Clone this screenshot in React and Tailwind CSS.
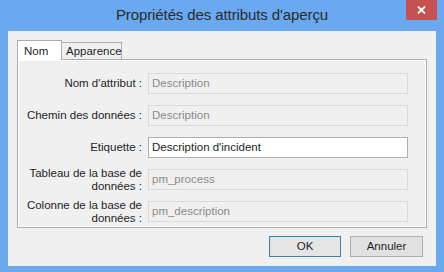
import React from 'react';

const rows = [
  { label: ['Nom d\'attribut :'], value: 'Description', enabled: false },
  { label: ['Chemin des données :'], value: 'Description', enabled: false },
  { label: ['Etiquette :'], value: 'Description d\'incident', enabled: true },
  { label: ['Tableau de la base de', 'données :'], value: 'pm_process', enabled: false },
  { label: ['Colonne de la base de', 'données :'], value: 'pm_description', enabled: false },
];

const App = () => {
  return (
    <div
      className="w-[444px] h-[272px] bg-[#6aa8ef] flex flex-col text-[#1e1e1e]"
      style={{ fontFamily: '"Liberation Sans", Arial, sans-serif' }}
    >
      {/* Title bar */}
      <div className="relative h-[31px] flex items-center justify-center">
        <span className="text-[15px] text-[#2b2b2b] tracking-[-0.1px]">Propriétés des attributs d'aperçu</span>
        <div className="absolute right-[7px] top-0 w-[31px] h-[20px] bg-[#c75050] flex items-center justify-center">
          <svg width="9" height="8" viewBox="0 0 9 8">
            <path d="M1 0.5 L8 7.5 M8 0.5 L1 7.5" stroke="white" strokeWidth="1.8" />
          </svg>
        </div>
      </div>

      {/* Client area */}
      <div className="flex-1 mx-[8px] mb-[6px] bg-[#f0f0f0] flex flex-col pt-[8px] px-[9px]">
        {/* Tabs */}
        <div className="flex items-end h-[20px] text-[11.5px]">
          <div className="w-[45px] h-[20px] bg-white border border-b-0 border-[#acacac] pl-[6px] pt-[2px] relative z-10 -mb-px">
            Nom
          </div>
          <div className="w-[60px] h-[17px] bg-[#f0f0f0] border border-l-0 border-b-0 border-[#acacac] pl-[4px] leading-[16px]">
            Apparence
          </div>
        </div>

        {/* Panel */}
        <div className="h-[169px] border border-[#acacac]">
          <div className="h-full border border-white flex flex-col gap-[11px] pt-[12px] text-[11.5px]">
            {rows.map((row, i) => (
              <div key={i} className="flex items-center h-[21px]">
                <div className="w-[123px] text-right leading-[13px] text-[#1e1e1e]">
                  {row.label.map((l, j) => (
                    <div key={j}>{l}</div>
                  ))}
                </div>
                <div
                  className={
                    row.enabled
                      ? 'ml-[6px] w-[260px] h-[21px] bg-white border border-[#abadb3] flex items-center px-[3px] text-[#1e1e1e]'
                      : 'ml-[6px] w-[260px] h-[21px] bg-[#f0f0f0] border border-[#d9d9d9] flex items-center px-[3px] text-[#8a8a8a]'
                  }
                >
                  {row.value}
                </div>
              </div>
            ))}
          </div>
        </div>

        {/* Buttons */}
        <div className="flex justify-end gap-[9px] mt-[8px] pr-[4px] text-[11.5px]">
          <button className="w-[72px] h-[21px] bg-[#e5e5e5] border border-[#3c7fb1] text-[#1e1e1e]">OK</button>
          <button className="w-[73px] h-[21px] bg-[#e1e1e1] border border-[#adadad] text-[#1e1e1e]">Annuler</button>
        </div>
      </div>
    </div>
  );
};

export default App;
